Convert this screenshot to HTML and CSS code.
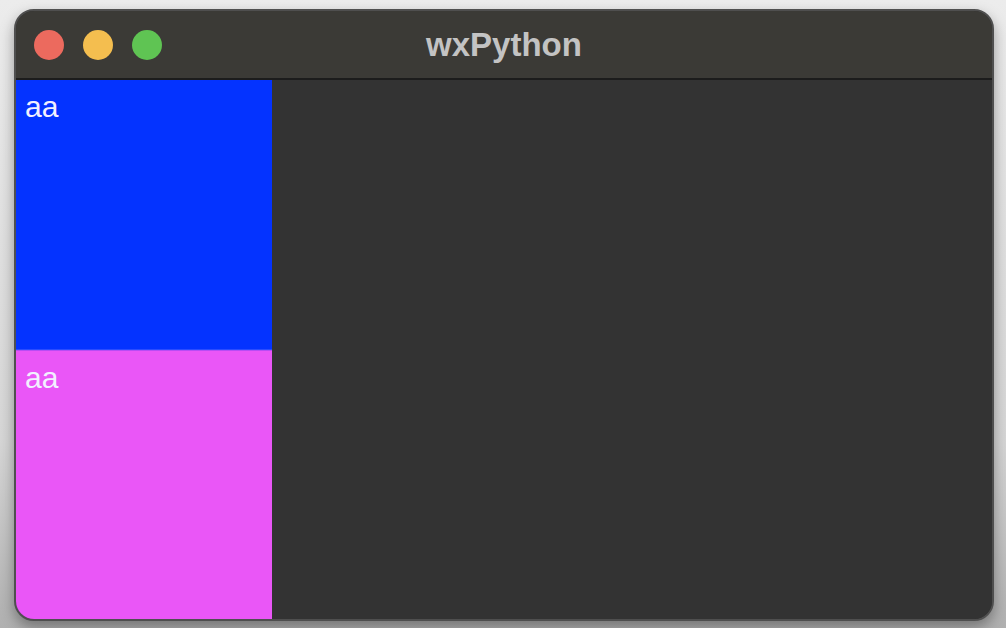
FILE: index.html
```html
<!DOCTYPE html>
<html>
<head>
<meta charset="utf-8">
<link rel="stylesheet" href="styles.css">
<title>wxPython</title>
</head>
<body>
<div class="window">
  <div class="titlebar">
    <div class="lights">
      <span class="light red"></span>
      <span class="light yellow"></span>
      <span class="light green"></span>
    </div>
    <div class="title">wxPython</div>
  </div>
  <div class="content">
    <div class="sidebar">
      <div class="panel blue"><span class="label">aa</span></div>
      <div class="panel pink"><span class="label">aa</span></div>
    </div>
    <div class="main"></div>
  </div>
</div>
</body>
</html>
```

FILE: styles.css
```css
html, body {
  margin: 0;
  padding: 0;
  height: 100%;
}
body {
  background: linear-gradient(to bottom, #ececec 0%, #d6d6d6 70%, #b0b0b0 100%);
  font-family: "Liberation Sans", Arial, sans-serif;
  overflow: hidden;
}
.window {
  position: relative;
  margin: 9px 0 0 14px;
  width: 980px;
  height: 612px;
  box-sizing: border-box;
  border: 2px solid #4f4f4f;
  border-radius: 20px;
  overflow: hidden;
  display: flex;
  flex-direction: column;
  background: #333333;
  box-shadow: 0 6px 14px rgba(0,0,0,0.35);
}
.titlebar {
  height: 67px;
  flex: none;
  background: #3b3a36;
  border-bottom: 2px solid #1c1c1c;
  display: flex;
  align-items: center;
  position: relative;
}
.lights {
  display: flex;
  gap: 19px;
  padding-left: 18px;
  margin-top: 1px;
}
.light {
  width: 30px;
  height: 30px;
  border-radius: 50%;
  display: block;
}
.red { background: #ec6a5e; }
.yellow { background: #f4be4f; }
.green { background: #5fc453; }
.title {
  position: absolute;
  left: 0;
  right: 0;
  top: 0;
  bottom: 0;
  display: flex;
  align-items: center;
  justify-content: center;
  color: #c3c3c3;
  font-weight: bold;
  font-size: 33px;
  padding-left: 0;
  padding-top: 1px;
}
.content {
  flex: 1;
  display: flex;
  min-height: 0;
}
.sidebar {
  width: 256px;
  flex: none;
  display: flex;
  flex-direction: column;
}
.panel {
  padding: 10px 0 0 9px;
  box-sizing: border-box;
}
.blue {
  height: 270px;
  background: #0433ff;
  border-bottom: 1px solid #2a4cff;
}
.pink {
  flex: 1;
  background: #ea56f7;
  border-top: 1px solid #b84cf4;
}
.label {
  color: #f2f0ff;
  font-size: 30px;
  line-height: 34px;
}
.main {
  flex: 1;
  background: #333333;
}
```
